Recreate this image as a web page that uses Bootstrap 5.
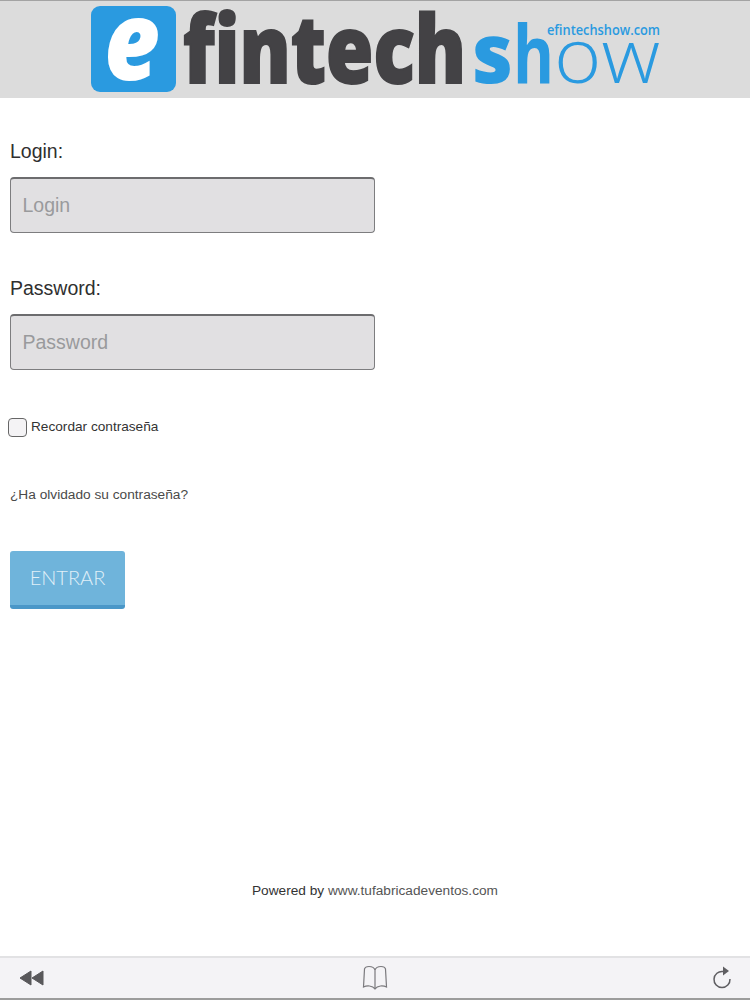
<!DOCTYPE html>
<html lang="es">

<head>
    <meta charset="UTF-8">
    <meta name="viewport" content="width=device-width, initial-scale=1.0">
    <title>efintechshow</title>
    <link rel="stylesheet" href="https://cdn.jsdelivr.net/npm/bootstrap@5.3.0/dist/css/bootstrap.min.css">
    <style>
        html, body { height: 100%; }
        body { font-family: "Liberation Sans", Arial, sans-serif; color: #333; background: #fff; }
        .page-wrap { height: 1000px; }
        .logo-bar { height: 98px; background: #dcdcdc; border-top: 1px solid #a3a3a3; }
        .logo-bar svg { display: block; margin-top: -1px; }
        .logo-word { font-family: "Open Sans", sans-serif; }
        .login-form { padding: 41px 0 0 10px; }
        .field-label { font-size: 19.5px; line-height: 24px; margin: 0 0 14px; color: #2f2f2f; display: block; }
        .field-input.form-control {
            width: 365px; height: 56px; background: #e1e0e2; border: 1.5px solid #7d7d7f; border-top: 2px solid #6c6c6e; border-radius: 4px;
            font-size: 19.5px; padding: 0 11.5px; color: #333; margin-bottom: 43px; box-shadow: none;
        }
        .field-input.form-control::placeholder { color: #999a9c; opacity: 1; }
        .remember-row { margin: 46px 0 0 -2px; height: 22px; }
        .remember-row .form-check-input {
            width: 19px; height: 19px; margin: 0; background-color: #f4f3f5; border: 1px solid #666; border-radius: 4px;
        }
        .remember-row label { font-size: 13.65px; color: #333; margin-left: 4px; }
        .forgot-link { display: block; margin-top: 48px; font-size: 13.7px; line-height: 18px; color: #4a4a4a; text-decoration: none; }
        .enter-btn.btn {
            display: block; margin-top: 47px; width: 115px; height: 58px; padding: 0 0 2px; background: #6fb4db; color: #e0f0f8;
            border: 0; border-bottom: 4px solid #4a97c8; border-radius: 3px; font-size: 20px; font-weight: 300; font-family: "Lato", "Liberation Sans", sans-serif;
        }
        .powered-line { font-size: 13.67px; line-height: 18px; color: #333; text-align: center; margin-bottom: 56px; }
        .powered-line span { color: #555; }
        .safari-bar { height: 44px; background: #f4f3f6; border-top: 2px solid #e2e2e4; border-bottom: 2px solid #9c9c9c; padding: 0 18px 0 19px; }
        .book-icon { margin-right: 7px; }
    </style>
</head>

<body>
    <div class="page-wrap d-flex flex-column">
        <header class="logo-bar flex-shrink-0">
            <svg width="750" height="98" viewBox="0 0 750 98" role="img" aria-label="efintechshow">
                <rect x="91" y="6" width="85" height="86" rx="9" fill="#2a9ae0"/>
                <text class="logo-word" x="104" y="80" font-size="110" font-weight="800" font-style="italic" fill="#fff" textLength="56" lengthAdjust="spacingAndGlyphs">e</text>
                <text class="logo-word" x="183" y="83" font-size="94" font-weight="800" fill="#434245" stroke="#434245" stroke-width="2" textLength="283" lengthAdjust="spacingAndGlyphs">fintech</text>
                <text class="logo-word" x="472" y="83" font-size="84" font-weight="800" fill="#2a9ae0" textLength="41" lengthAdjust="spacingAndGlyphs">s</text>
                <text class="logo-word" x="513" y="83" font-size="80" font-weight="700" fill="#2a9ae0" textLength="41" lengthAdjust="spacingAndGlyphs">h</text>
                <text class="logo-word" x="554" y="83" font-size="76" font-weight="300" fill="#2a9ae0" textLength="106" lengthAdjust="spacingAndGlyphs">ow</text>
                <text class="logo-word" x="547" y="35" font-size="15" font-weight="600" fill="#2a9ae0" textLength="113" lengthAdjust="spacingAndGlyphs">efintechshow.com</text>
            </svg>
        </header>

        <main class="login-form flex-grow-1">
            <label class="field-label" for="login">Login:</label>
            <input type="text" id="login" class="form-control field-input" placeholder="Login">
            <label class="field-label" for="password">Password:</label>
            <input type="password" id="password" class="form-control field-input" placeholder="Password">
            <div class="remember-row d-flex align-items-center">
                <input type="checkbox" id="remember" class="form-check-input">
                <label for="remember">Recordar contraseña</label>
            </div>
            <a href="#" class="forgot-link">¿Ha olvidado su contraseña?</a>
            <button type="button" class="btn enter-btn">ENTRAR</button>
        </main>

        <p class="powered-line">Powered by <span>www.tufabricadeventos.com</span></p>

        <nav class="safari-bar flex-shrink-0 d-flex align-items-center justify-content-between">
            <svg width="26" height="18" viewBox="0 0 26 18" aria-label="Atrás">
                <path d="M12 2 L1 9 L12 16 Z M24 2 L13 9 L24 16 Z" fill="#59585b" stroke="#59585b" stroke-linejoin="round"/>
            </svg>
            <svg class="book-icon" width="26" height="26" viewBox="0 0 26 26" aria-label="Marcadores">
                <path d="M13 5 C12 2 9.5 1.5 7 1.5 C5 1.5 3 2 2.5 4 L1.5 22 C3.5 21 5.5 20.8 7.5 21 C10 21.3 12 22.5 13 24 C14 22.5 16 21.3 18.5 21 C20.5 20.8 22.5 21 24.5 22 L23.5 4 C23 2 21 1.5 19 1.5 C16.5 1.5 14 2 13 5 Z M13 5 V24" fill="none" stroke="#7a797d" stroke-width="1.2"/>
            </svg>
            <svg width="20" height="24" viewBox="0 0 20 24" aria-label="Recargar">
                <path d="M11 5.5 A8 8 0 1 0 18 13" fill="none" stroke="#5f5e62" stroke-width="1.5"/>
                <path d="M11 0.5 L17 5 L11 9.5 Z" fill="#5f5e62"/>
            </svg>
        </nav>
    </div>
    <script src="https://cdn.jsdelivr.net/npm/bootstrap@5.3.0/dist/js/bootstrap.bundle.min.js"></script>
</body>

</html>
